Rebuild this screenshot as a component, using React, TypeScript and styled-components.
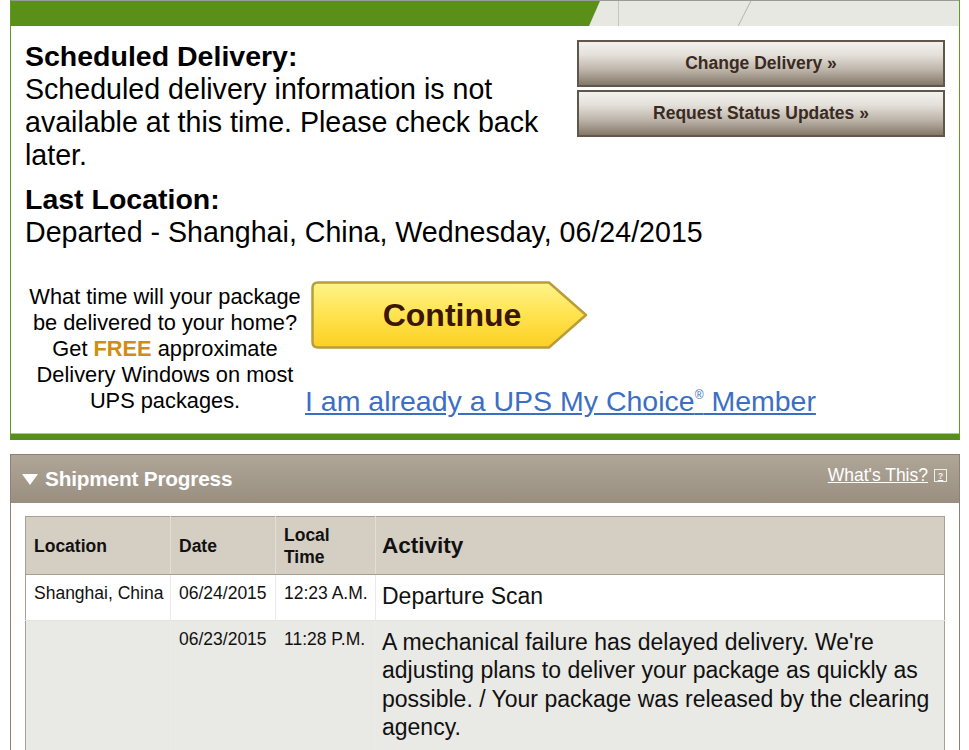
import styled, { createGlobalStyle } from "styled-components";

const GlobalStyle = createGlobalStyle`
  html, body {
    margin: 0;
    padding: 0;
    background: #fff;
  }
  body {
    font-family: "Liberation Sans", Arial, Helvetica, sans-serif;
    color: #000;
  }
`;

const Page = styled.div`
  width: 969px;
  box-sizing: border-box;
  padding: 0 9px 0 10px;
`;

const TrackCard = styled.section`
  border-left: 1px solid #5f9a24;
  border-right: 1px solid #5f9a24;
  border-bottom: 6px solid #5a8e1c;
`;

const TabStrip = styled.div`
  display: flex;
  height: 26px;
  background: #e8e8e3;
  border-top: 1px solid #9a9a96;
  box-sizing: border-box;
`;

const ActiveTab = styled.div`
  width: 589px;
  flex: none;
  background: #5a8f1a;
  clip-path: polygon(0 0, 100% 0, calc(100% - 11px) 100%, 0 100%);
`;

const TabEdge = styled.div`
  width: 18px;
  flex: none;
  border-right: 1px solid #c6c6bf;
`;

const TabSlant = styled.div`
  width: 1px;
  flex: none;
  margin-left: 125px;
  background: #b4b4ac;
  transform: skewX(-27deg);
`;

const CardBody = styled.div`
  padding: 14px 14px 19px 14px;
  border-bottom: 1px solid #a9cf7e;
`;

const TopRow = styled.div`
  display: flex;
  align-items: flex-start;
`;

const StatusBlock = styled.div`
  flex: 1;
  padding-right: 10px;
`;

const Label = styled.div`
  font-weight: bold;
  font-size: 28.5px;
  line-height: 33px;
`;

const Value = styled.div`
  font-size: 28.6px;
  line-height: 33px;
`;

const LastLocation = styled.div`
  margin-top: 11px;
`;

const ButtonStack = styled.div`
  width: 368px;
  flex: none;
  display: flex;
  flex-direction: column;
  gap: 3px;
`;

const ActionButton = styled.button`
  height: 47px;
  box-sizing: border-box;
  border: 2px solid #625549;
  background: linear-gradient(
    to bottom,
    #f3f1ee 0%,
    #e4e0da 30%,
    #bdb4a9 65%,
    #837869 100%
  );
  font-family: inherit;
  font-weight: bold;
  font-size: 17.5px;
  color: #3a2b22;
  cursor: pointer;
  padding: 0;
`;

const Promo = styled.div`
  display: flex;
  margin-top: 35px;
`;

const PromoText = styled.p`
  width: 280px;
  flex: none;
  margin: 0;
  text-align: center;
  font-size: 21.8px;
  line-height: 26px;
`;

const Free = styled.strong`
  color: #d08d15;
`;

const PromoActions = styled.div`
  display: flex;
  flex-direction: column;
  justify-content: space-between;
  align-items: flex-start;
`;

const ContinueButton = styled.button`
  position: relative;
  width: 277px;
  height: 68px;
  margin-left: 6px;
  margin-top: -3px;
  padding: 0;
  border: none;
  background: none;
  display: flex;
  align-items: center;
  justify-content: center;
  font-family: inherit;
  font-weight: bold;
  font-size: 32px;
  color: #3b1600;
  cursor: pointer;
`;

const ArrowShape = styled.svg`
  position: absolute;
  inset: 0;
`;

const ContinueLabel = styled.span`
  position: relative;
  padding-left: 5px;
`;

const MemberLink = styled.a`
  font-size: 28.5px;
  line-height: 26px;
  color: #3c6fc2;
  text-decoration: underline;
  sup {
    font-size: 12px;
    vertical-align: 12px;
    line-height: 0;
  }
`;

const ProgressPanel = styled.section`
  margin-top: 14px;
  border: 1px solid #8c8174;
`;

const PanelHeader = styled.div`
  height: 48px;
  display: flex;
  align-items: center;
  padding: 0 12px 0 11px;
  background: linear-gradient(to bottom, #b0a698, #998e80);
  color: #fff;
`;

const PanelTitle = styled.h2`
  margin: 0 0 0 7px;
  font-size: 20.8px;
  font-weight: bold;
  letter-spacing: -0.2px;
`;

const WhatsThis = styled.a`
  margin-left: auto;
  align-self: flex-start;
  margin-top: 10px;
  display: flex;
  align-items: center;
  font-size: 17.5px;
  color: #fff;
  text-decoration: underline;
`;

const HelpIcon = styled.span`
  display: inline-flex;
  align-items: center;
  justify-content: center;
  width: 11px;
  height: 11px;
  margin-left: 6px;
  border: 1px solid #f1ede7;
  font-size: 9px;
  font-weight: bold;
  color: #f1ede7;
  text-decoration: none;
`;

const PanelBody = styled.div`
  padding: 13px 14px 14px;
  background: #fff;
`;

const Table = styled.table`
  width: 100%;
  border-collapse: collapse;
  border: 1px solid #aaa094;
`;

const Th = styled.th<{ $w?: number; $big?: boolean }>`
  width: ${(p) => (p.$w ? `${p.$w}px` : "auto")};
  height: 58px;
  box-sizing: border-box;
  padding: 0 4px 0 8px;
  background: #d5cec3;
  border-right: 1px solid #e2ddd5;
  border-bottom: 1px solid #a59b8e;
  text-align: left;
  vertical-align: middle;
  font-size: ${(p) => (p.$big ? "22.5px" : "17.5px")};
  line-height: 22px;
  font-weight: bold;
  color: #111;
  &:last-child {
    border-right: none;
    padding-left: 6px;
  }
`;

const Row = styled.tr<{ $shade?: boolean }>`
  background: ${(p) => (p.$shade ? "#e9e9e5" : "#fff")};
  border-bottom: 1px solid #e2e2de;
`;

const Td = styled.td`
  padding: 8px 4px 8px 8px;
  vertical-align: top;
  font-size: 17.5px;
  line-height: 20px;
  white-space: nowrap;
  border-right: 1px solid #ecebe7;
  color: #111;
`;

const ActivityTd = styled.td`
  padding: 7px 6px 9px 6px;
  vertical-align: top;
  font-size: 23px;
  line-height: 28.5px;
  color: #111;
`;

const activities = [
  {
    location: "Shanghai, China",
    date: "06/24/2015",
    time: "12:23 A.M.",
    activity: "Departure Scan",
  },
  {
    location: "",
    date: "06/23/2015",
    time: "11:28 P.M.",
    activity:
      "A mechanical failure has delayed delivery. We're adjusting plans to deliver your package as quickly as possible. / Your package was released by the clearing agency.",
  },
];

export default function App() {
  return (
    <>
      <GlobalStyle />
      <Page>
        <TrackCard>
          <TabStrip>
            <ActiveTab />
            <TabEdge />
            <TabSlant />
          </TabStrip>
          <CardBody>
            <TopRow>
              <StatusBlock>
                <Label>Scheduled Delivery:</Label>
                <Value>
                  Scheduled delivery information is not available at this
                  time. Please check back later.
                </Value>
              </StatusBlock>
              <ButtonStack>
                <ActionButton>Change Delivery »</ActionButton>
                <ActionButton>Request Status Updates »</ActionButton>
              </ButtonStack>
            </TopRow>
            <LastLocation>
              <Label>Last Location:</Label>
              <Value>Departed - Shanghai, China, Wednesday, 06/24/2015</Value>
            </LastLocation>
            <Promo>
              <PromoText>
                What time will your package be delivered to your home? Get{" "}
                <Free>FREE</Free> approximate Delivery Windows on most UPS
                packages.
              </PromoText>
              <PromoActions>
                <ContinueButton>
                  <ArrowShape width="277" height="68" viewBox="0 0 277 68">
                    <defs>
                      <linearGradient id="yellow" x1="0" y1="0" x2="0" y2="1">
                        <stop offset="0" stopColor="#fff48a" />
                        <stop offset="0.5" stopColor="#ffe34f" />
                        <stop offset="1" stopColor="#fccf22" />
                      </linearGradient>
                    </defs>
                    <path
                      d="M7 1.5 H238 L275 34 L238 66.5 H7 Q1.5 66.5 1.5 61 V7 Q1.5 1.5 7 1.5 Z"
                      fill="url(#yellow)"
                      stroke="#b99d38"
                      strokeWidth="2.5"
                      strokeLinejoin="round"
                    />
                  </ArrowShape>
                  <ContinueLabel>Continue</ContinueLabel>
                </ContinueButton>
                <MemberLink href="#">
                  I am already a UPS My Choice<sup>®</sup> Member
                </MemberLink>
              </PromoActions>
            </Promo>
          </CardBody>
        </TrackCard>

        <ProgressPanel>
          <PanelHeader>
            <svg width="16" height="11" viewBox="0 0 16 11">
              <polygon points="0,0 16,0 8,11" fill="#fff" />
            </svg>
            <PanelTitle>Shipment Progress</PanelTitle>
            <WhatsThis href="#">
              What's This?
              <HelpIcon>?</HelpIcon>
            </WhatsThis>
          </PanelHeader>
          <PanelBody>
            <Table>
              <thead>
                <tr>
                  <Th $w={145}>Location</Th>
                  <Th $w={105}>Date</Th>
                  <Th $w={100}>
                    Local
                    <br />
                    Time
                  </Th>
                  <Th $big>Activity</Th>
                </tr>
              </thead>
              <tbody>
                {activities.map((a, i) => (
                  <Row key={i} $shade={i % 2 === 1}>
                    <Td>{a.location}</Td>
                    <Td>{a.date}</Td>
                    <Td>{a.time}</Td>
                    <ActivityTd>{a.activity}</ActivityTd>
                  </Row>
                ))}
              </tbody>
            </Table>
          </PanelBody>
        </ProgressPanel>
      </Page>
    </>
  );
}
